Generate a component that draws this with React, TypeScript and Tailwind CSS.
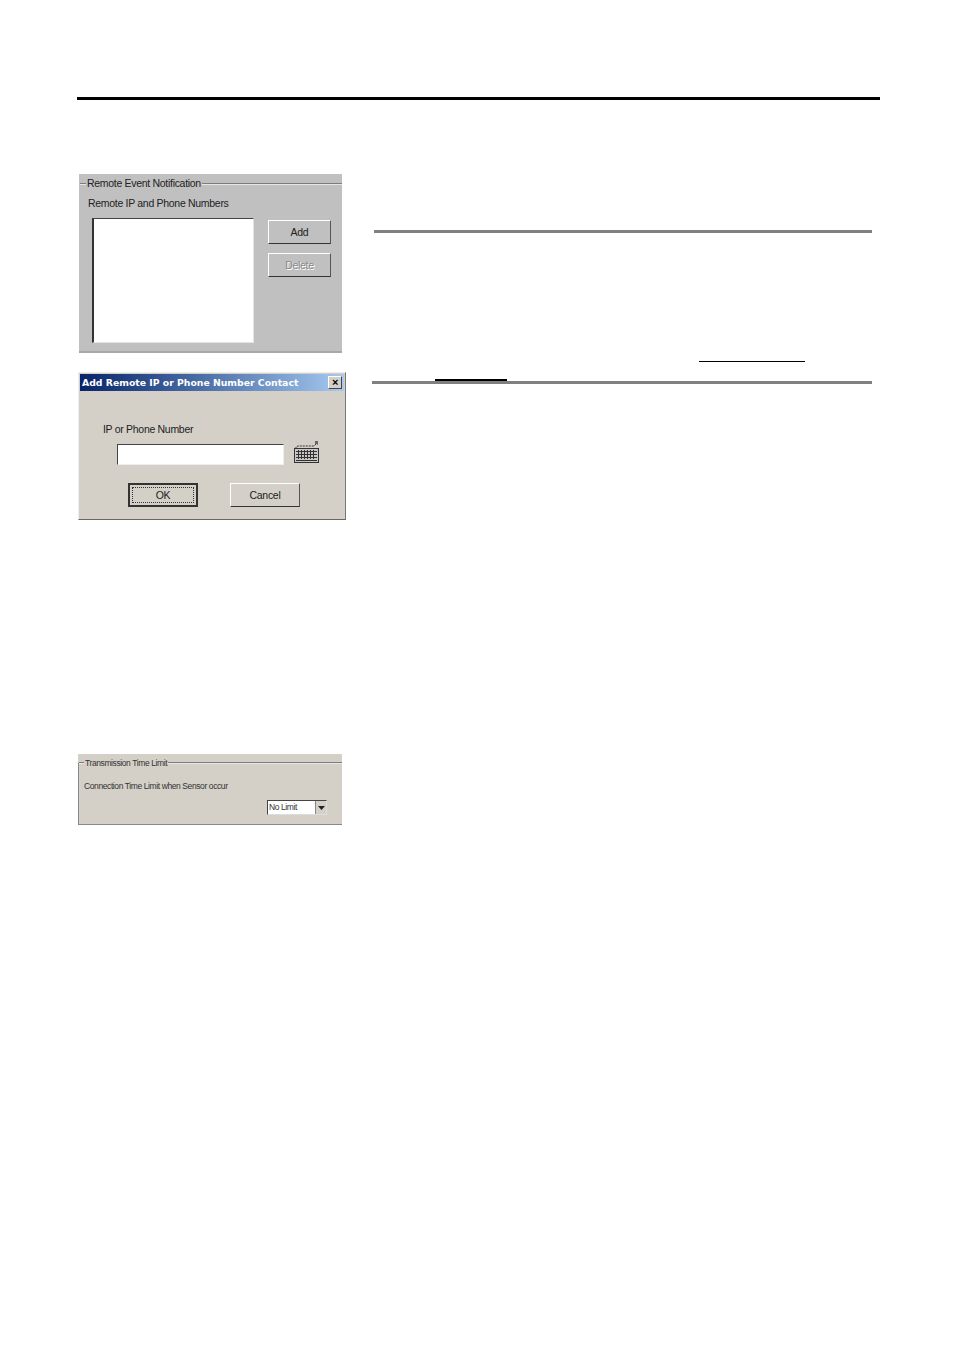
const ui = { fontFamily: '"Liberation Sans", Arial, sans-serif' }

function Legend({ label, className, lead = 'w-[6px]' }: { label: string; className: string; lead?: string }) {
  return (
    <div className={`flex items-center ${className}`}>
      <span className={`${lead} h-[2px] border-t border-t-[#7d7d7d] border-b border-b-[#e6e6e6]`} />
      <span className="px-[1px] whitespace-nowrap">{label}</span>
      <span className="flex-1 h-[2px] border-t border-t-[#7d7d7d] border-b border-b-[#e6e6e6]" />
    </div>
  )
}

function WinButton({ label, disabled, className }: { label: string; disabled?: boolean; className: string }) {
  return (
    <div className={`flex items-center justify-center pt-[1px] border border-t-white border-l-white border-r-[#555555] border-b-[#333333] ${disabled ? 'text-[#8a8a8a] [text-shadow:1px_1px_0_#ffffff]' : 'text-[#222222]'} ${className}`}>
      {label}
    </div>
  )
}

function KeyboardIcon() {
  return (
    <svg width="26" height="23" viewBox="0 0 26 23" className="shrink-0">
      <path d="M2 9 L2 7 L4 6 L20 6 L22 4 L24 4" fill="none" stroke="#333333" strokeWidth="1" strokeDasharray="2 1" />
      <rect x="21" y="1" width="3" height="3" fill="#666666" />
      <rect x="0.5" y="8.5" width="24" height="14" fill="#c8c8c8" stroke="#333333" />
      <g stroke="#333333" strokeWidth="1">
        <path d="M2 11.5H23M2 14.5H23M2 17.5H23M2 20.5H23" />
        <path d="M4.5 10V19M7.5 10V19M10.5 10V19M13.5 10V19M16.5 10V19M19.5 10V19" />
      </g>
    </svg>
  )
}

function RemoteEventPanel() {
  return (
    <section className="ml-[2px] w-[263px] h-[179px] bg-[#c0c0c0] border-b-2 border-[#a8a8a8] pt-[3px] text-[10.5px] tracking-[-0.3px] text-[#222222] flex flex-col">
      <Legend label="Remote Event Notification" className="pl-[1px] h-[13px]" />
      <p className="ml-[9px] mt-[6px] leading-[14px]">Remote IP and Phone Numbers</p>
      <div className="flex mt-[8px] ml-[13px]">
        <div className="w-[162px] h-[125px] bg-white border border-l-2 border-t-[#444444] border-l-[#333333] border-r-[#e4e4e4] border-b-[#e4e4e4]" />
        <div className="ml-[14px] mt-[2px] flex flex-col gap-[9px]">
          <WinButton label="Add" className="w-[63px] h-[24px]" />
          <WinButton label="Delete" disabled className="w-[63px] h-[24px]" />
        </div>
      </div>
    </section>
  )
}

function AddContactDialog() {
  return (
    <section className="ml-[1px] mt-[19px] w-[268px] h-[148px] bg-[#d4d0c8] border border-t-[#eeeeee] border-l-[#eeeeee] border-r-[#777777] border-b-[#666666] p-[1px] text-[10.5px] tracking-[-0.3px] text-[#222222]">
      <div className="h-[17px] bg-gradient-to-r from-[#0a246a] to-[#a6caf0] flex items-center pl-[2px] pr-[2px] justify-between">
        <span className="text-[9.3px] tracking-normal font-bold text-white whitespace-nowrap" style={{ fontFamily: '"DejaVu Sans", sans-serif' }}>Add Remote IP or Phone Number Contact</span>
        <span className="w-[14px] h-[13px] bg-[#d4d0c8] border border-t-white border-l-white border-r-[#444444] border-b-[#444444] flex items-center justify-center text-[11px] leading-none font-bold text-black">×</span>
      </div>
      <p className="ml-[23px] mt-[31px] leading-[14px]">IP or Phone Number</p>
      <div className="flex items-start ml-[37px] mt-[1px]">
        <div className="w-[167px] h-[21px] mt-[7px] bg-white border border-t-[#444444] border-l-[#444444] border-r-[#eeeeee] border-b-[#eeeeee]" />
        <div className="ml-[10px] mt-[3px]"><KeyboardIcon /></div>
      </div>
      <div className="flex ml-[48px] mt-[18px] gap-[32px]">
        <div className="w-[70px] h-[24px] border-2 border-[#333333] p-[2px]">
          <div className="h-full flex items-center justify-center pt-[1px] border border-dotted border-[#333333]">OK</div>
        </div>
        <WinButton label="Cancel" className="w-[70px] h-[24px]" />
      </div>
    </section>
  )
}

function TimeLimitPanel() {
  return (
    <section className="ml-[1px] mt-[234px] w-[264px] h-[71px] bg-[#d4d0c8] pt-[9px] text-[8.5px] tracking-[-0.4px] text-[#333333]">
      <div className="h-[62px] border-l border-b border-[#888888] flex flex-col">
        <Legend label="Transmission Time Limit" lead="w-[5px]" className="h-[12px] -mt-[6px]" />
        <p className="ml-[5px] mt-[12px] leading-[11px]">Connection Time Limit when Sensor occur</p>
        <div className="ml-[188px] mt-[8px] w-[60px] h-[15px] flex bg-white border border-t-[#444444] border-l-[#444444] border-r-[#dddddd] border-b-[#dddddd]">
          <span className="flex-1 pl-[1px] leading-[13px]">No Limit</span>
          <span className="w-[11px] bg-[#d4d0c8] border-l border-[#888888] flex items-center justify-center">
            <svg width="7" height="4" viewBox="0 0 7 4"><path d="M0 0H7L3.5 4Z" fill="#222222" /></svg>
          </span>
        </div>
      </div>
    </section>
  )
}

export default function App() {
  return (
    <div className="w-[954px] h-[1349px] bg-white pt-[97px] pl-[77px]" style={ui}>
      <div className="w-[803px] h-[3px] bg-black" />
      <div className="flex mt-[74px]">
        <div className="w-[295px] shrink-0">
          <RemoteEventPanel />
          <AddContactDialog />
          <TimeLimitPanel />
        </div>
        <div className="flex-1 pt-[56px]">
          <div className="ml-[2px] w-[498px] h-[3px] bg-[#808080]" />
          <div className="ml-[327px] mt-[128px] w-[106px] h-px bg-black" />
          <div className="ml-[63px] mt-[17px] w-[72px] h-[2px] bg-black" />
          <div className="w-[500px] h-[3px] bg-[#808080]" />
        </div>
      </div>
    </div>
  )
}
